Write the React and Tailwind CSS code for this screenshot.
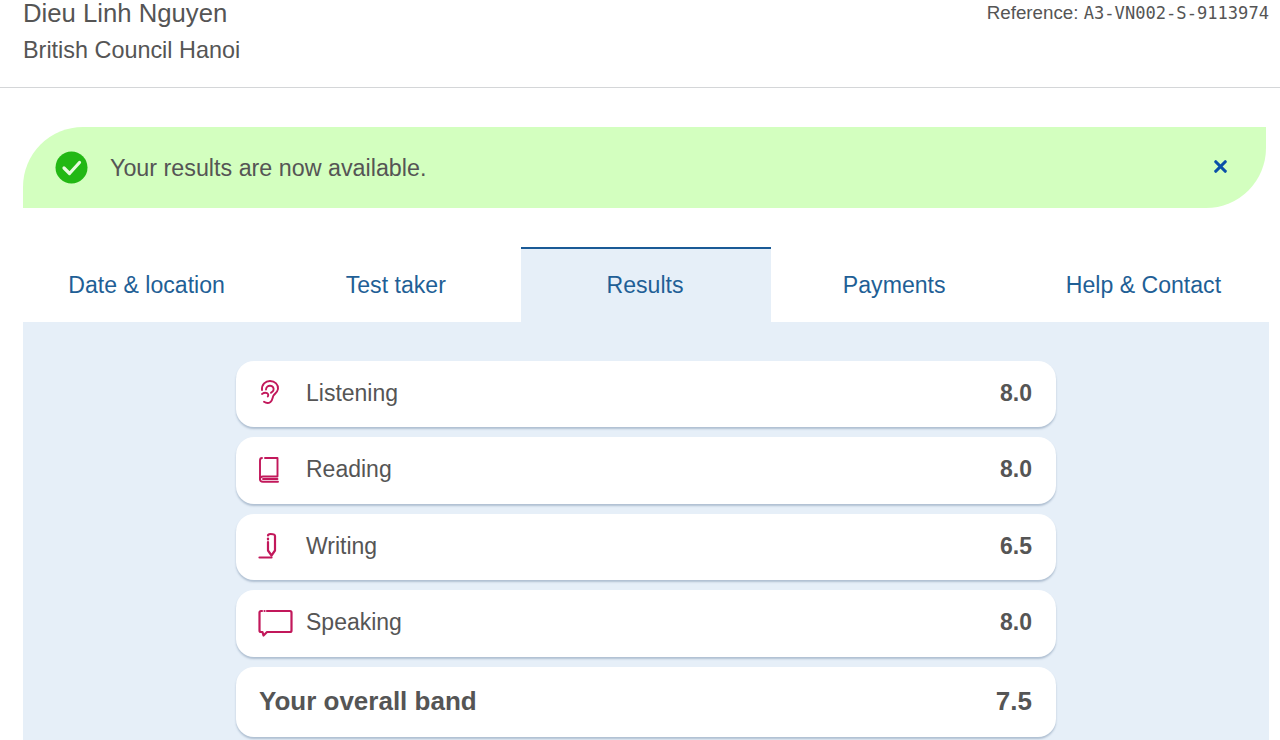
import { X } from "lucide-react";

const tabs = ["Date & location", "Test taker", "Results", "Payments", "Help & Contact"];

const EarIcon = () => (
  <svg width="24" height="28" viewBox="0 0 24 28" fill="none" stroke="#c2185b" strokeWidth="1.9" strokeLinecap="round" strokeLinejoin="round">
    <path d="M4 11C3.500 5.500 7.500 2 12 2c5 0 8.500 3.500 8 8-.4 3-3 4.500-4.500 6.500-1 1.500-.8 5-3 6.500-1.700 1.200-4.500 1.200-6.500-.2" />
    <path d="M8 10.500c.2-2.500 2-4 4.200-3.800 2.500.2 3.800 2.300 3.300 4.300-.4 1.500-1.500 2-2.500 2.800" />
    <path d="M4 15c1.500-1 3.500-1.500 5-.8 1.500.7 1.500 2.300.8 3.300" />
  </svg>
);

const BookIcon = () => (
  <svg width="22" height="28" viewBox="0 0 22 28" fill="none" stroke="#c2185b" strokeWidth="1.9" strokeLinecap="round" strokeLinejoin="round">
    <path d="M7 2h12.500v18.500H5c-1.700 0-3 1-3 2.500s1.300 2.800 3 2.800h15" />
    <path d="M2 23V4.500C2 3 3 2 4 2" />
    <path d="M5 23h14.500" />
  </svg>
);

const PenIcon = () => (
  <svg width="20" height="28" viewBox="0 0 20 28" fill="none" stroke="#c2185b" strokeWidth="2.2" strokeLinecap="round" strokeLinejoin="round">
    <path d="M10 3.500C10 2.500 11 2 12.500 2S17 2.500 17 4v14.500l-3.500 5-3.500-5V10" />
    <path d="M10 6.500v1" />
    <path d="M1.500 25.500h12" />
  </svg>
);

const ChatIcon = () => (
  <svg width="35" height="30" viewBox="0 0 35 30" fill="none" stroke="#c2185b" strokeWidth="2.2" strokeLinecap="round" strokeLinejoin="round">
    <path d="M9 3h23a1.500 1.500 0 0 1 1.500 1.500v18a1.500 1.500 0 0 1-1.500 1.500H9l-3.500 3.500-1-3.500H3A1.500 1.500 0 0 1 1.500 22.500v-18A1.500 1.500 0 0 1 3 3h1" />
    <path d="M6.500 3h.1" />
  </svg>
);

const rows = [
  { label: "Listening", score: "8.0", icon: <EarIcon />, h: "h-[66px]" },
  { label: "Reading", score: "8.0", icon: <BookIcon />, h: "h-[67px]" },
  { label: "Writing", score: "6.5", icon: <PenIcon />, h: "h-[66px]" },
  { label: "Speaking", score: "8.0", icon: <ChatIcon />, h: "h-[67px]" },
];

export default function App() {
  return (
    <div className="h-[740px] w-[1280px] overflow-hidden bg-white font-['Liberation_Sans',Arial,sans-serif] text-[#555555]">
      <header className="flex h-[88px] justify-between border-b border-[#d4d6d8] pl-[23px] pr-[11px]">
        <div className="-mt-[5px]">
          <div className="text-[25.7px] leading-[36px]">Dieu Linh Nguyen</div>
          <div className="text-[23.4px] leading-[38px]">British Council Hanoi</div>
        </div>
        <div className="pt-[1px] text-[18.8px] leading-[24px]">
          Reference: <span className="font-['DejaVu_Sans_Mono',monospace] text-[17.1px]">A3-VN002-S-9113974</span>
        </div>
      </header>

      <div className="mt-[39px] ml-[23px] mr-[14px] flex h-[81px] items-center justify-between rounded-tl-[60px] rounded-br-[60px] bg-[#d3ffbf] pl-[32px] pr-[36px]">
        <div className="flex items-center gap-[22px]">
          <svg width="33" height="33" viewBox="0 0 33 33">
            <circle cx="16.500" cy="16.500" r="16" fill="#22b814" />
            <path d="M9 17l5.500 5.500L24.500 11.500" fill="none" stroke="#e8fbe0" strokeWidth="3.200" strokeLinecap="round" strokeLinejoin="round" />
          </svg>
          <span className="mt-[1px] text-[23.3px]">Your results are now available.</span>
        </div>
        <X size={19} strokeWidth={4} className="mb-[3px] text-[#0a50a8]" />
      </div>

      <nav className="mt-[39px] ml-[23px] mr-[11px] flex h-[75px]">
        {tabs.map((t) => (
          <div
            key={t}
            className={
              t === "Results"
                ? "flex flex-1 items-center justify-center border-t-2 border-[#1a5a96] bg-[#e6eff8] pr-[2px] text-[23.1px] text-[#1f5f96]"
                : "flex flex-1 items-center justify-center border-t-2 border-transparent pr-[2px] text-[23.1px] text-[#1f5f96]"
            }
          >
            {t}
          </div>
        ))}
      </nav>

      <main className="ml-[23px] mr-[11px] h-[418px] bg-[#e6eff8] pt-[39px] pl-[213px] pr-[213px]">
        <div className="flex flex-col gap-[10px]">
          {rows.map((r) => (
            <div key={r.label} className={`${r.h} flex items-center rounded-[18px] bg-white pb-[2px] pl-[22px] pr-[24px] shadow-[0_2px_2px_rgba(110,135,165,0.45)]`}>
              <div className="flex w-[48px] shrink-0 items-center">{r.icon}</div>
              <span className="flex-1 text-[23px]">{r.label}</span>
              <span className="text-[23px] font-bold">{r.score}</span>
            </div>
          ))}
          <div className="flex h-[70px] items-center justify-between rounded-[18px] bg-white pb-[2px] pl-[23px] pr-[24px] shadow-[0_2px_2px_rgba(110,135,165,0.45)]">
            <span className="text-[26px] font-bold">Your overall band</span>
            <span className="text-[26px] font-bold">7.5</span>
          </div>
        </div>
      </main>
    </div>
  );
}
